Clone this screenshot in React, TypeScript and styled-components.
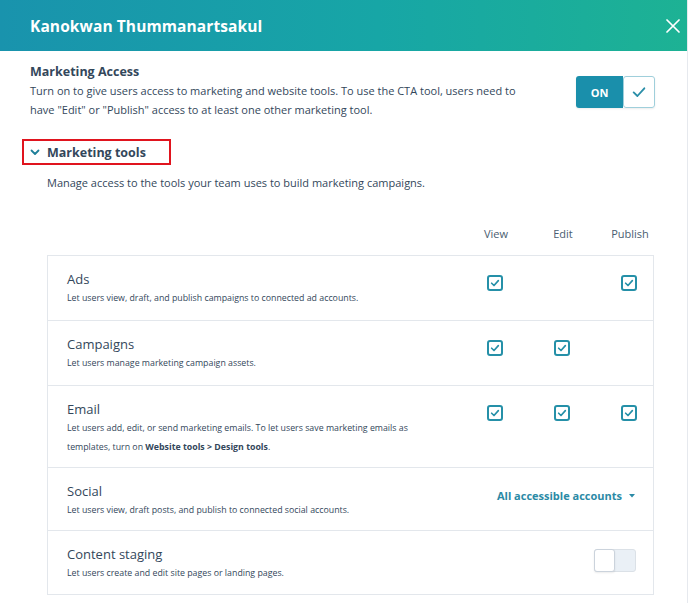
import React from "react";
import styled, { createGlobalStyle } from "styled-components";

const Global = createGlobalStyle`
  html, body { margin: 0; padding: 0; background: #fff; }
  body { font-family: "Open Sans", "Noto Sans", sans-serif; color: #33475b; }
  * { box-sizing: border-box; }
`;

const Panel = styled.div`
  width: 688px;
  height: 603px;
  overflow: hidden;
  border-right: 1px solid #e6e9ee;
  background: #fff;
`;

const Header = styled.header`
  height: 51px;
  padding: 0 4px 0 30px;
  display: flex;
  align-items: center;
  justify-content: space-between;
  background: linear-gradient(90deg, #1993ad 0%, #17a6a6 55%, #1db294 100%);
`;

const Title = styled.h1`
  margin: 0;
  font-size: 15.5px;
  font-weight: 700;
  color: #fff;
  letter-spacing: 0.1px;
`;

const Close = styled.button`
  border: 0;
  background: transparent;
  padding: 0;
  width: 20px;
  height: 20px;
  display: flex;
  align-items: center;
  justify-content: center;
  color: #fff;
  cursor: pointer;
`;

const Body = styled.div`
  padding: 12px 33px 0 30px;
`;

const AccessRow = styled.div`
  display: flex;
  justify-content: space-between;
  align-items: flex-start;
`;

const AccessText = styled.div`
  width: 500px;
`;

const SectionTitle = styled.div`
  font-size: 12.5px;
  font-weight: 700;
  line-height: 18px;
`;

const Desc = styled.p<{ $indent?: number }>`
  margin: 0;
  font-size: 11px;
  line-height: 19px;
  padding-left: ${(p) => p.$indent ?? 0}px;
`;

const BigToggle = styled.div`
  margin-top: 13px;
  margin-right: -1px;
  display: flex;
  height: 32px;
  border-radius: 3px;
  box-shadow: 0 1px 2px rgba(0, 0, 0, 0.08);
`;

const ToggleOn = styled.div`
  width: 47px;
  background: #1a8fab;
  color: #fff;
  font-weight: 700;
  font-size: 11px;
  display: flex;
  align-items: center;
  justify-content: center;
  border-radius: 3px 0 0 3px;
`;

const ToggleKnob = styled.div`
  width: 32px;
  border: 1px solid #9fcfdb;
  border-radius: 3px;
  background: #fff;
  display: flex;
  align-items: center;
  justify-content: center;
`;

const ToolsHeading = styled.div`
  margin: 20px 0 0 -8px;
  display: inline-flex;
  align-items: center;
  gap: 7px;
  width: 149px;
  height: 26px;
  padding-left: 6px;
  border: 2px solid #e0141e;
  font-size: 12.5px;
  font-weight: 700;
`;

const ColHeads = styled.div`
  margin: 34px 0 0 17px;
  display: grid;
  grid-template-columns: 1fr 40px 40px 40px;
  column-gap: 27px;
  padding-right: 4px;
  font-size: 11px;
  color: #4a5d70;
  height: 29px;
  align-items: start;
`;

const ColHead = styled.div`
  text-align: center;
  white-space: nowrap;
`;

const Table = styled.div`
  margin: 0 0 0 17px;
  border: 1px solid #e3e7ec;
`;

const Row = styled.div<{ $h: number }>`
  display: grid;
  grid-template-columns: 1fr 40px 40px 40px;
  column-gap: 27px;
  padding: 0 4px 0 19px;
  height: ${(p) => p.$h}px;
  border-top: 1px solid #e3e7ec;
  &:first-child { border-top: 0; }
`;

const RowText = styled.div`
  padding-top: 14px;
`;

const RowTitle = styled.div`
  font-size: 13px;
  line-height: 18px;
`;

const RowDesc = styled.div`
  font-size: 8.8px;
  line-height: 19px;
  margin-top: 1px;
  b { font-weight: 700; }
`;

const Cell = styled.div`
  display: flex;
  justify-content: center;
  padding-top: 19px;
`;

const Box = styled.span`
  width: 16px;
  height: 16px;
  border: 2px solid #2590a8;
  border-radius: 3px;
  display: flex;
  align-items: center;
  justify-content: center;
  background: #fff;
`;

const RightCell = styled.div<{ $pr: number }>`
  grid-column: 2 / 5;
  display: flex;
  justify-content: flex-end;
  align-items: flex-start;
  padding-right: ${(p) => p.$pr}px;
`;

const Dropdown = styled.span`
  margin-top: 20px;
  display: inline-flex;
  align-items: center;
  gap: 7px;
  font-size: 11px;
  font-weight: 700;
  color: #2b8aa6;
`;

const SmallToggle = styled.span`
  margin-top: 18px;
  width: 42px;
  height: 23px;
  display: flex;
  border: 1px solid #dbe1e7;
  border-radius: 3px;
  background: #eaf0f6;
`;

const SmallKnob = styled.span`
  width: 21px;
  background: #fff;
  border: 1px solid #cbd3dc;
  border-radius: 3px;
  margin: -1px 0 0 -1px;
  height: 23px;
  box-shadow: 0 1px 2px rgba(0, 0, 0, 0.08);
`;

const Check = ({ size = 10, color = "#2590a8", w = 2 }: { size?: number; color?: string; w?: number }) => (
  <svg width={size} height={size} viewBox="0 0 12 12" fill="none">
    <path d="M2 6.3 L4.8 9 L10 3.2" stroke={color} strokeWidth={w} strokeLinecap="round" strokeLinejoin="round" />
  </svg>
);

type Tool = {
  name: string;
  desc: React.ReactNode;
  h: number;
  perms?: [boolean, boolean, boolean];
  kind?: "dropdown" | "toggle";
};

const tools: Tool[] = [
  { name: "Ads", desc: "Let users view, draft, and publish campaigns to connected ad accounts.", h: 64, perms: [true, false, true] },
  { name: "Campaigns", desc: "Let users manage marketing campaign assets.", h: 65, perms: [true, true, false] },
  {
    name: "Email",
    desc: (
      <>
        Let users add, edit, or send marketing emails. To let users save marketing emails as
        <br />
        templates, turn on <b>Website tools &gt; Design tools</b>.
      </>
    ),
    h: 82,
    perms: [true, true, true],
  },
  { name: "Social", desc: "Let users view, draft posts, and publish to connected social accounts.", h: 63, kind: "dropdown" },
  { name: "Content staging", desc: "Let users create and edit site pages or landing pages.", h: 64, kind: "toggle" },
];

export default function App() {
  return (
    <Panel>
      <Global />
      <Header>
        <Title>Kanokwan Thummanartsakul</Title>
        <Close aria-label="Close">
          <svg width="14" height="14" viewBox="0 0 14 14">
            <path d="M1 1 L13 13 M13 1 L1 13" stroke="#fff" strokeWidth="1.7" strokeLinecap="round" />
          </svg>
        </Close>
      </Header>
      <Body>
        <AccessRow>
          <AccessText>
            <SectionTitle>Marketing Access</SectionTitle>
            <Desc>
              Turn on to give users access to marketing and website tools. To use the CTA tool, users need to
              have "Edit" or "Publish" access to at least one other marketing tool.
            </Desc>
          </AccessText>
          <BigToggle>
            <ToggleOn>ON</ToggleOn>
            <ToggleKnob>
              <Check size={16} color="#2a8ea8" w={1.4} />
            </ToggleKnob>
          </BigToggle>
        </AccessRow>
        <ToolsHeading>
          <svg width="10" height="7" viewBox="0 0 10 7">
            <path d="M1.5 1.5 L5 5 L8.5 1.5" stroke="#1f7f99" strokeWidth="1.8" fill="none" strokeLinecap="round" strokeLinejoin="round" />
          </svg>
          Marketing tools
        </ToolsHeading>
        <Desc $indent={17} style={{ marginTop: 8 }}>
          Manage access to the tools your team uses to build marketing campaigns.
        </Desc>
        <ColHeads>
          <span />
          <ColHead>View</ColHead>
          <ColHead>Edit</ColHead>
          <ColHead>Publish</ColHead>
        </ColHeads>
        <Table>
          {tools.map((t) => (
            <Row key={t.name} $h={t.h}>
              <RowText>
                <RowTitle>{t.name}</RowTitle>
                <RowDesc>{t.desc}</RowDesc>
              </RowText>
              {t.perms &&
                t.perms.map((on, i) => (
                  <Cell key={i}>
                    {on && (
                      <Box>
                        <Check size={10} w={2} />
                      </Box>
                    )}
                  </Cell>
                ))}
              {t.kind === "dropdown" && (
                <RightCell $pr={14}>
                  <Dropdown>
                    All accessible accounts
                    <svg width="6" height="4" viewBox="0 0 6 4">
                      <path d="M0 0 H6 L3 3.5 Z" fill="#2b8aa6" />
                    </svg>
                  </Dropdown>
                </RightCell>
              )}
              {t.kind === "toggle" && (
                <RightCell $pr={13}>
                  <SmallToggle>
                    <SmallKnob />
                  </SmallToggle>
                </RightCell>
              )}
            </Row>
          ))}
        </Table>
      </Body>
    </Panel>
  );
}
